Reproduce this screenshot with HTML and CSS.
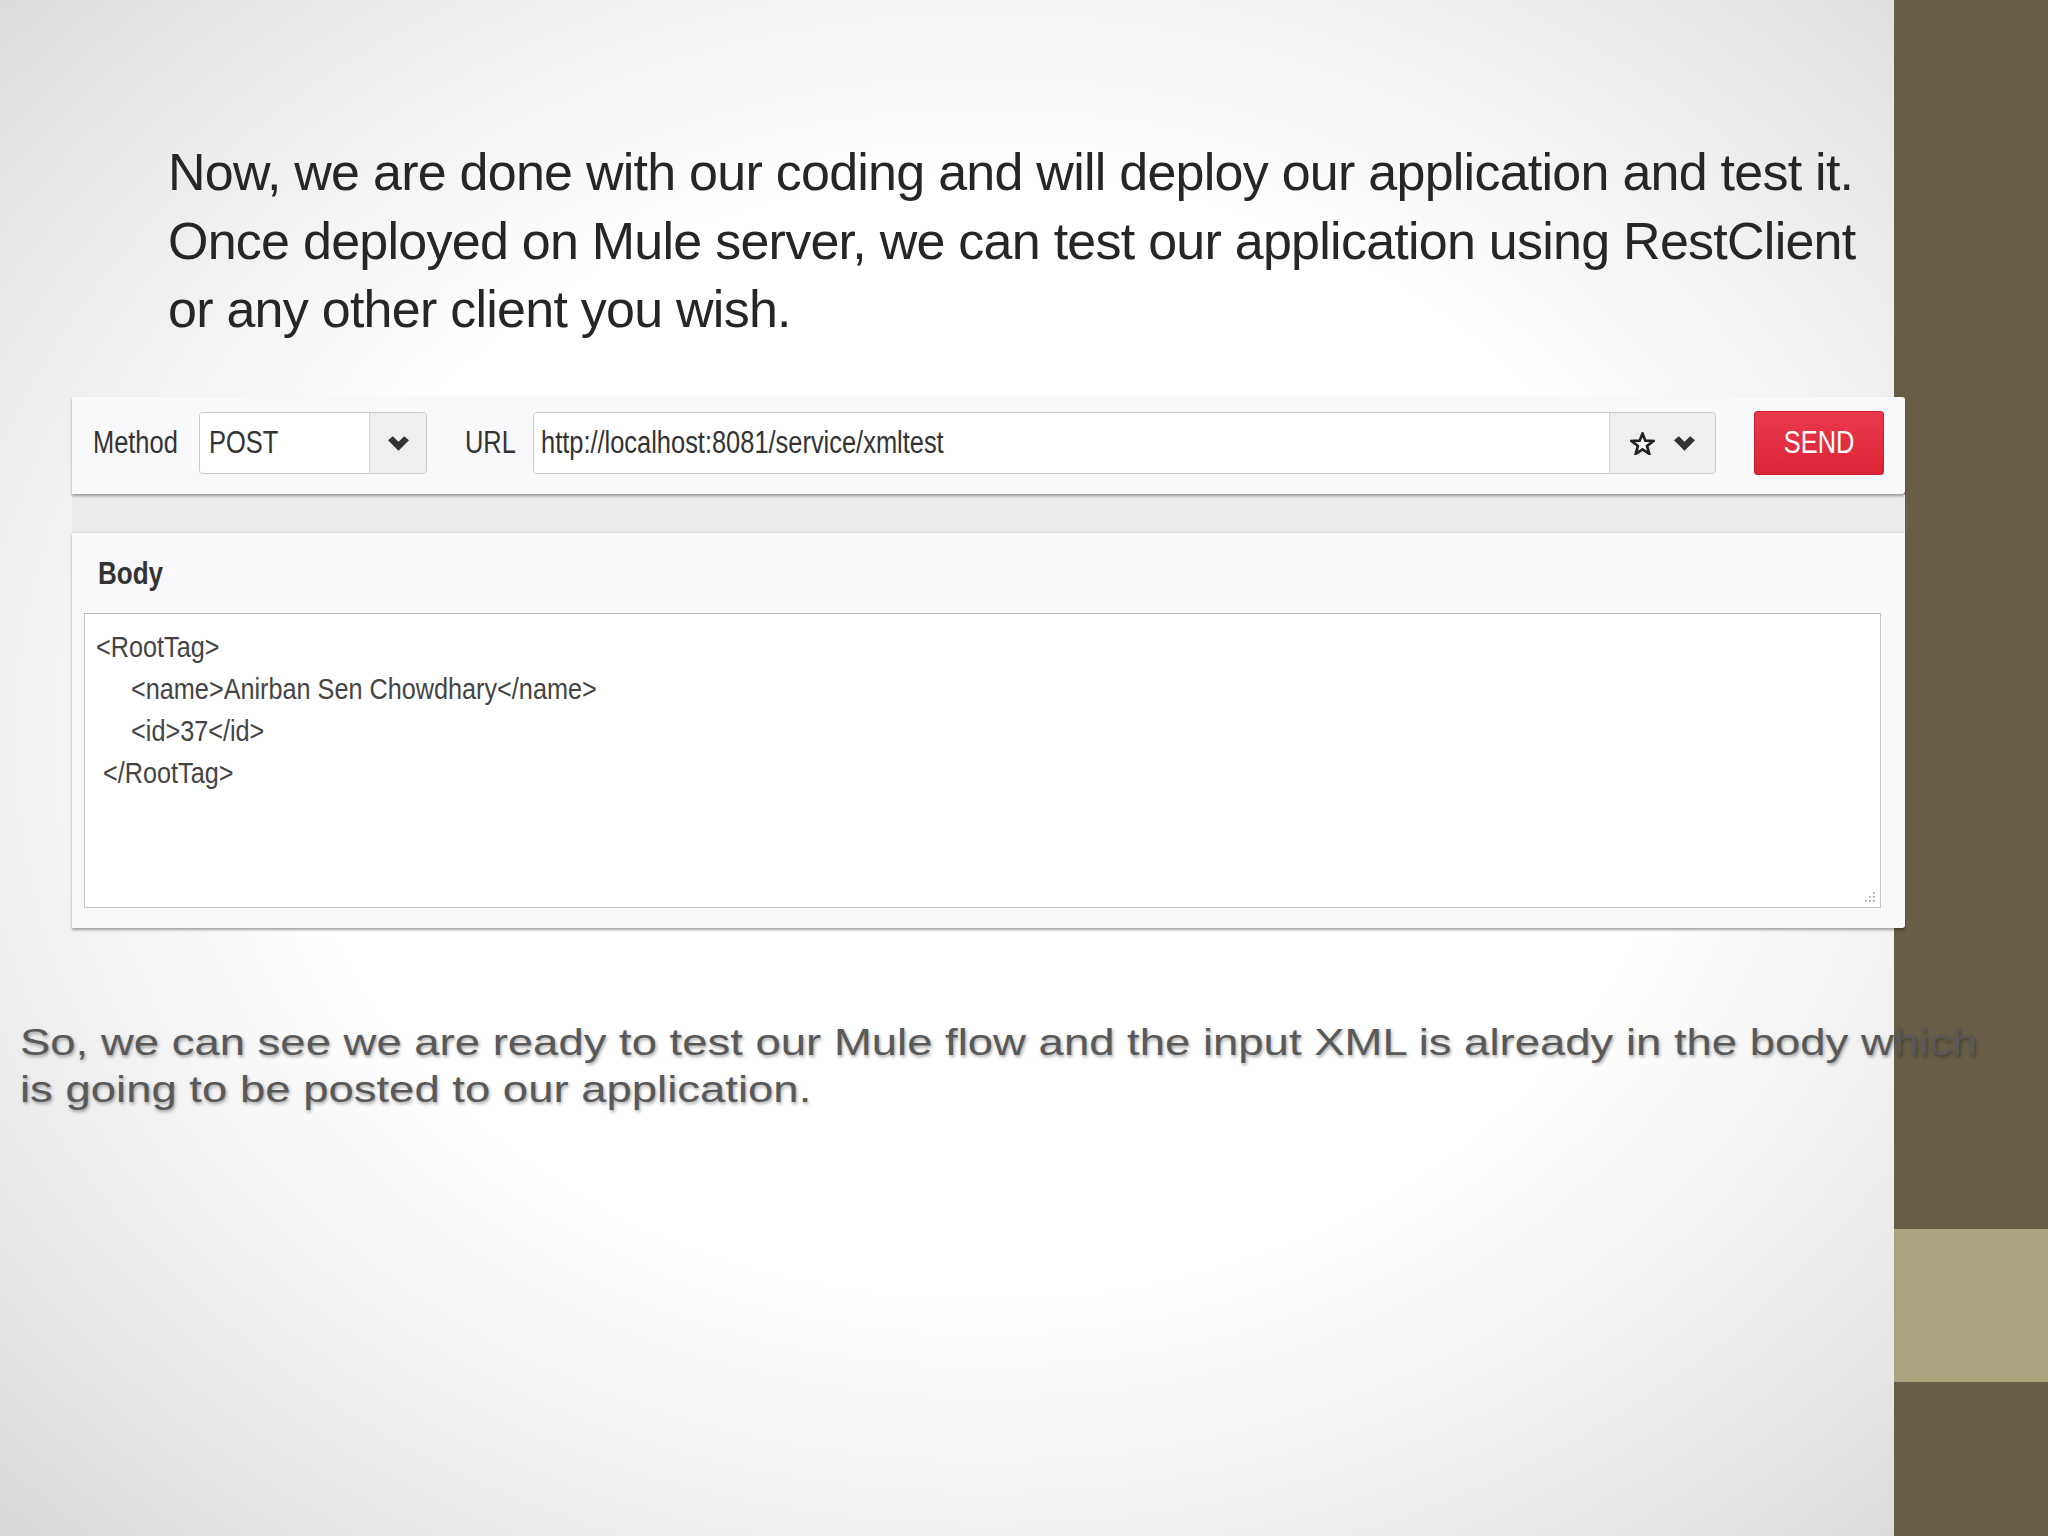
FILE: index.html
```html
<!DOCTYPE html>
<html lang="en">
<head>
    <meta charset="UTF-8">
    <title>Testing the Mule flow with RestClient</title>
    <link rel="stylesheet" href="styles.css">
</head>
<body>
    <div class="slide">
        <p class="title">Now, we are done with our coding and will deploy our application and test it.<br>Once deployed on Mule server, we can test our application using RestClient<br>or any other client you wish.</p>

        <div class="client">
            <div class="toolbar">
                <span class="label label-method"><span class="narrow">Method</span></span>
                <div class="select">
                    <span class="select-value"><span class="narrow">POST</span></span>
                    <span class="select-caret">
                        <svg class="chevron" viewBox="0 0 20 14"><polygon points="0,4 4.6,0 10,5.4 15.4,0 20,4 10,14"/></svg>
                    </span>
                </div>
                <span class="label label-url"><span class="narrow">URL</span></span>
                <div class="url">
                    <span class="url-value"><span class="narrow">http://localhost:8081/service/xmltest</span></span>
                    <span class="url-addon">
                        <svg class="star" viewBox="0 0 24 22"><polygon points="12,1.5 14.7,8.3 22.4,8.6 16.4,13.4 18.5,20.9 12,16.6 5.5,20.9 7.6,13.4 1.6,8.6 9.3,8.3"/></svg>
                        <svg class="chevron" viewBox="0 0 20 14"><polygon points="0,4 4.6,0 10,5.4 15.4,0 20,4 10,14"/></svg>
                    </span>
                </div>
                <button class="send"><span class="narrow">SEND</span></button>
            </div>
            <div class="band"></div>
            <div class="body-card">
                <div class="body-label"><span class="narrow">Body</span></div>
                <div class="body-text">
<pre>&lt;RootTag&gt;
     &lt;name&gt;Anirban Sen Chowdhary&lt;/name&gt;
     &lt;id&gt;37&lt;/id&gt;
 &lt;/RootTag&gt;</pre>
                    <svg class="grip" viewBox="0 0 12 12">
                        <rect x="9" y="1" width="1.6" height="1.6"/>
                        <rect x="9" y="5" width="1.6" height="1.6"/>
                        <rect x="5" y="5" width="1.6" height="1.6"/>
                        <rect x="9" y="9" width="1.6" height="1.6"/>
                        <rect x="5" y="9" width="1.6" height="1.6"/>
                        <rect x="1" y="9" width="1.6" height="1.6"/>
                    </svg>
                </div>
            </div>
        </div>

        <p class="note">So, we can see we are ready to test our Mule flow and the input XML is already in the body which<br>is going to be posted to our application.</p>
    </div>
</body>
</html>
```

FILE: styles.css
```css
body {
    margin: 0;
    width: 2048px;
    height: 1536px;
    overflow: hidden;
    font-family: "Liberation Sans", Arial, sans-serif;
    background:
        linear-gradient(#aaa47e, #aaa47e) 1894px 1229px / 154px 153px no-repeat,
        linear-gradient(#685e47, #685e47) 1894px 0 / 154px 100% no-repeat,
        radial-gradient(ellipse at 52% 48%, #ffffff 50%, #e6e6e6 85%, #d9d9d9 100%) 0 0 / 1894px 100% no-repeat;
}
.slide {
    padding-top: 138px;
}
.title {
    margin: 0 0 0 168px;
    font-size: 52px;
    line-height: 68.5px;
    letter-spacing: -0.75px;
    color: #262626;
    white-space: nowrap;
}

/* RestClient screenshot: its font is a narrow one */
.client {
    margin: 53px 0 0 72px;
    width: 1833px;
}
.narrow {
    display: inline-block;
    transform: scaleX(0.82);
    transform-origin: 0 50%;
    white-space: nowrap;
}
.toolbar {
    position: relative;
    z-index: 1;
    display: flex;
    align-items: center;
    box-sizing: border-box;
    height: 97px;
    padding: 0 21px 4px 21px;
    background-color: #f9f9fb;
    border-radius: 0 3px 3px 0;
    box-shadow: 0 2px 3px rgba(0,0,0,0.35);
}
.label {
    font-size: 31px;
    color: #333;
}
.label-method {
    width: 84px;
}
.label-url {
    width: 48px;
    margin-left: 38px;
}
.select,
.url {
    display: flex;
    box-sizing: border-box;
    height: 62px;
    border: 1px solid #c9c9c9;
    border-radius: 4px;
    overflow: hidden;
}
.select {
    width: 228px;
    margin-left: 22px;
}
.select-value,
.url-value {
    display: flex;
    align-items: center;
    flex: 1;
    min-width: 0;
    background-color: #fff;
    font-size: 31px;
    color: #333;
}
.select-value {
    padding-left: 9px;
}
.url-value {
    padding-left: 7px;
}
.select-caret,
.url-addon {
    display: flex;
    align-items: center;
    justify-content: center;
    background-color: #efeff1;
    border-left: 1px solid #d2d2d2;
}
.select-caret {
    width: 56px;
}
.url {
    flex: 1;
    margin-left: 20px;
}
.url-addon {
    width: 105px;
    gap: 19px;
}
.chevron {
    width: 21px;
    height: 15px;
    fill: #333;
}
.star {
    width: 25px;
    height: 23px;
    fill: #fff;
    stroke: #222;
    stroke-width: 2.6;
}
.send {
    width: 130px;
    height: 64px;
    margin-left: 38px;
    padding: 0;
    border: 1px solid #c9202f;
    border-radius: 3px;
    background: linear-gradient(#e8394b, #dc2536);
    color: #fff;
    font-family: inherit;
    font-size: 31px;
}
.send .narrow {
    transform-origin: 50% 50%;
}
.band {
    height: 38px;
    background-color: #ebebed;
}
.body-card {
    padding: 21px 24px 20px 12px;
    background-color: #f9f9fb;
    border-top: 1px solid #dcdcdc;
    border-radius: 0 0 3px 0;
    box-shadow: 0 2px 3px rgba(0,0,0,0.35);
}
.body-label {
    margin-left: 14px;
    font-size: 31px;
    font-weight: bold;
    line-height: 40px;
    color: #333;
}
.body-label .narrow {
    transform: scaleX(0.84);
}
.body-text {
    position: relative;
    box-sizing: border-box;
    height: 295px;
    margin-top: 19px;
    padding: 12px 11px 10px;
    background-color: #fff;
    border: 1px solid #c6c6c6;
    border-top-color: #b8b8b8;
}
.body-text pre {
    margin: 0;
    font-family: inherit;
    font-size: 29px;
    line-height: 42px;
    color: #444;
    transform: scaleX(0.87);
    transform-origin: 0 0;
}
.grip {
    position: absolute;
    right: 4px;
    bottom: 4px;
    width: 12px;
    height: 12px;
    fill: #999;
}

.note {
    width: 1595px;
    margin: 91px 0 0 20px;
    font-size: 37px;
    line-height: 47px;
    color: #595959;
    text-shadow: 1px 2px 3px rgba(0,0,0,0.35);
    white-space: nowrap;
    transform: scaleX(1.229);
    transform-origin: 0 0;
}
```
